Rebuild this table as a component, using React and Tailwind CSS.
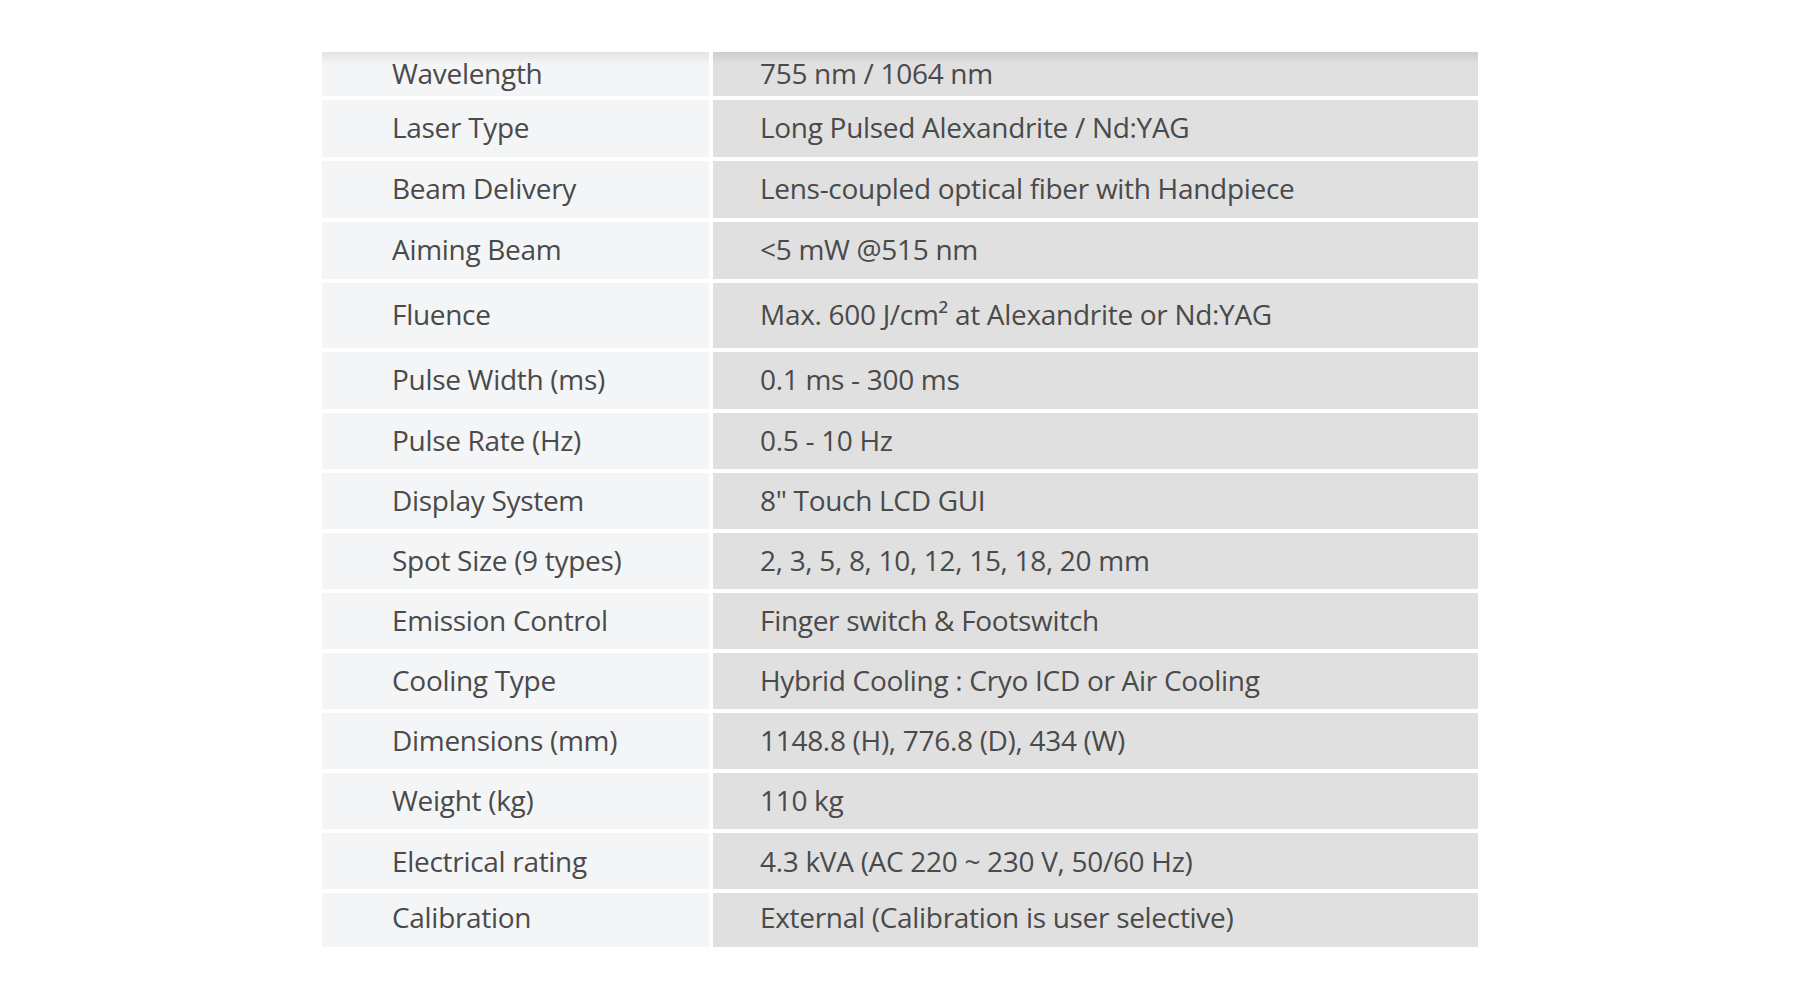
const specs = [
  { label: "Wavelength", value: "755 nm / 1064 nm", h: "h-[44px] pb-[2px]", top: true },
  { label: "Laser Type", value: "Long Pulsed Alexandrite / Nd:YAG", h: "h-[57px] pb-[3px]" },
  { label: "Beam Delivery", value: "Lens-coupled optical fiber with Handpiece", h: "h-[57px] pb-[3px]" },
  { label: "Aiming Beam", value: "<5 mW @515 nm", h: "h-[57px] pb-[3px]" },
  { label: "Fluence", value: "Max. 600 J/cm² at Alexandrite or Nd:YAG", h: "h-[65px] pb-[3px]" },
  { label: "Pulse Width (ms)", value: "0.1 ms - 300 ms", h: "h-[57px] pb-[3px]" },
  { label: "Pulse Rate (Hz)", value: "0.5 - 10 Hz", h: "h-[56px] pb-[3px]" },
  { label: "Display System", value: '8" Touch LCD GUI', h: "h-[56px] pb-[3px]" },
  { label: "Spot Size (9 types)", value: "2, 3, 5, 8, 10, 12, 15, 18, 20 mm", h: "h-[56px] pb-[3px]" },
  { label: "Emission Control", value: "Finger switch & Footswitch", h: "h-[56px] pb-[2px]" },
  { label: "Cooling Type", value: "Hybrid Cooling : Cryo ICD or Air Cooling", h: "h-[56px] pb-[2px]" },
  { label: "Dimensions (mm)", value: "1148.8 (H), 776.8 (D), 434 (W)", h: "h-[56px] pb-[2px]" },
  { label: "Weight (kg)", value: "110 kg", h: "h-[56px] pb-[2px]" },
  { label: "Electrical rating", value: "4.3 kVA (AC 220 ~ 230 V, 50/60 Hz)", h: "h-[56px]" },
  { label: "Calibration", value: "External (Calibration is user selective)", h: "h-[54px] pb-[6px]" },
];

const App = () => {
  return (
    <div className="min-h-[1000px] w-full bg-white pt-[52px] pl-[322px] font-['Open_Sans',sans-serif] text-[#4a4a4a]">
      {/* Spec table */}
      <div className="w-[1156px] flex flex-col gap-[4px] bg-white">
        {specs.map((row) => (
          <div key={row.label} className="flex gap-[4px]">
            <div
              className={`w-[387px] flex items-center pl-[70px] text-[28px] tracking-[-0.3px] ${row.h} ${
                row.top
                  ? "bg-[linear-gradient(to_bottom,#e2e3e4,#f4f5f6_12px)]"
                  : "bg-[#f4f5f6]"
              }`}
            >
              {row.label}
            </div>
            <div
              className={`flex-1 flex items-center pl-[47px] text-[28px] tracking-[-0.3px] ${row.h} ${
                row.top
                  ? "bg-[linear-gradient(to_bottom,#cdcdcd,#e0e0e0_12px)]"
                  : "bg-[#e0e0e0]"
              }`}
            >
              {row.value}
            </div>
          </div>
        ))}
      </div>
    </div>
  );
};

export default App;
